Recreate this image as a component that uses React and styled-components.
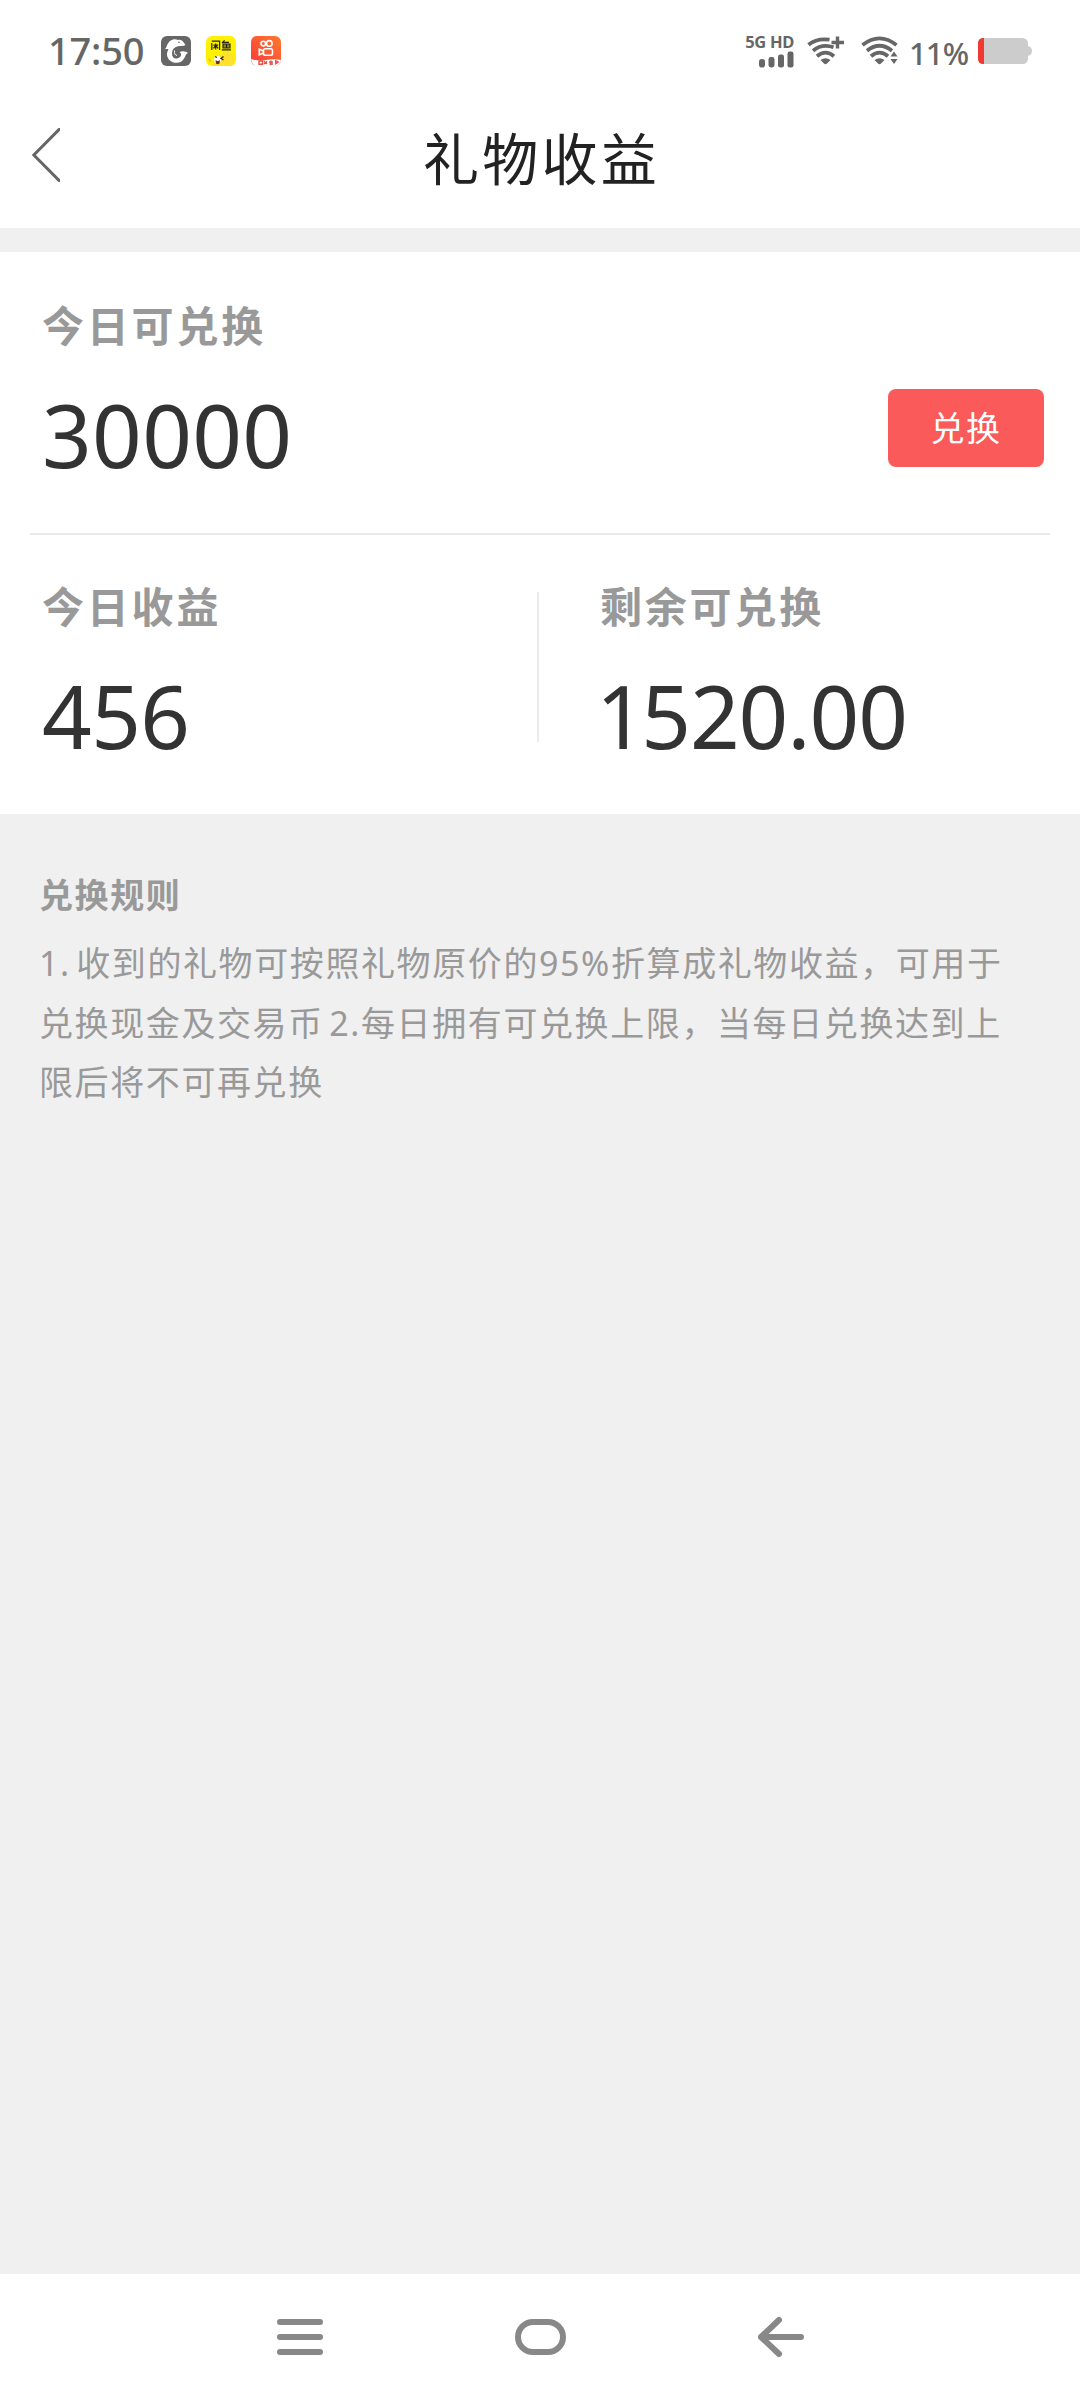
import styled, { createGlobalStyle } from "styled-components";

const RULES = "1. 收到的礼物可按照礼物原价的95%折算成礼物收益，可用于兑换现金及交易币 2.每日拥有可兑换上限，当每日兑换达到上限后将不可再兑换";

const DolphinIcon = () => (
  <svg width="30" height="30" viewBox="0 0 30 30">
    <rect width="30" height="30" rx="6" fill="#666" />
    <path d="M3.5 13.5 C6 12 5.5 8 9 5 C12 2.6 15 3 17 4 C21 3 22 5.5 24.5 9 C22 10.5 19.5 9.5 17 10.2 C13 11 11 14 11 17 C11 21 13 23 16 22.5 C19 22 20.5 20 20 17.5 L18.5 16 C22 14.5 25 15.5 27 17 C24 18 24.5 22.5 20.5 25.5 C14 29 6.5 25 6 19 C5.8 16.5 6.5 15.5 7.5 13.5 C6 12.8 5 13 3.5 13.5 Z" fill="#fff" />
    <path d="M13.5 14.5 C13 17.5 14 19 16 19.5" fill="none" stroke="#fff" strokeWidth="1" />
    <circle cx="18" cy="6.3" r="0.8" fill="#666" />
  </svg>
);

const XianyuIcon = () => (
  <svg width="30" height="30" viewBox="0 0 30 30">
    <rect width="30" height="30" rx="6" fill="#fff200" />
    <path d="M6 30 C7 21 10 18.5 15 19 C18 14.5 27 15 28 21 L28 28 Q26 30 24 30 Z" fill="#ffe02c" />
    <path d="M5.8 7 V14 M5.8 5.2 H13.6 V14 M9.7 7.4 V13.4 M7.4 9.2 H12.2 M9.7 9.5 L7.4 12.3 M9.7 9.5 L12.2 12.3 M18.6 4.4 L16 7 M17 6.4 H23 M17 8.2 H24 V11.8 H17 Z M20.5 8 V12 M17 10 H24 M15.8 13.8 H25" fill="none" stroke="#262510" strokeWidth="1.2" />
    <circle cx="11.5" cy="23.5" r="3.6" fill="#fff" />
    <path d="M9 20.5 L11 21.5 M17.5 20.5 L15 22.5 L17.5 24" fill="none" stroke="#29200c" strokeWidth="1.3" />
    <path d="M9.5 24 Q12 26 14 24 L13.5 27.5 Q11.5 29 10 27.5 Z" fill="#713315" />
    <path d="M2.5 22.5 L4.5 25.5 M3 25 H5.5" stroke="#edc816" strokeWidth="1.4" />
  </svg>
);

const KwaiIcon = () => (
  <svg width="30" height="30" viewBox="0 0 30 30">
    <defs>
      <linearGradient id="kwai" x1="0" y1="1" x2="1" y2="0">
        <stop offset="0" stopColor="#fa393b" />
        <stop offset="1" stopColor="#ff792d" />
      </linearGradient>
    </defs>
    <rect width="30" height="30" rx="6" fill="url(#kwai)" />
    <g fill="none" stroke="#fff" strokeWidth="1.6">
      <circle cx="12.3" cy="7.6" r="2.3" />
      <circle cx="18.3" cy="7.4" r="2.8" />
      <rect x="12.5" y="12.8" width="9" height="6.4" rx="1.8" />
      <path d="M12.5 15 L8.3 13.3 V18.8 L12.5 17" />
    </g>
    <path d="M0 23 Q8 25.5 15 24 Q23 22.5 30 24 Q29 30 24 30 H6 Q1 30 0 23 Z" fill="#fff" />
    <path d="M8 25 H11.5 V28.3 H8 Z M13 25.2 L16 28 M16 25.2 L13 28 M18 26 H22 M20 24.5 V29 M18.5 28 H22" fill="none" stroke="#f34a42" strokeWidth="1.4" />
    <path d="M24 23.5 L28.5 26 L24 29 Z" fill="#f94b67" />
  </svg>
);

const SignalIcon = () => (
  <svg width="36" height="17" viewBox="0 0 36 17" fill="#666">
    <rect x="1" y="8" width="6" height="8.5" rx="2.8" />
    <rect x="10.5" y="6" width="6" height="10.5" rx="2.4" />
    <rect x="20" y="3.5" width="6" height="13" rx="2.2" />
    <rect x="29.5" y="0.5" width="6" height="16" rx="2.2" />
  </svg>
);

const WifiIcon = ({ plus }) => (
  <svg width="38" height="30" viewBox="0 0 38 30">
    <g fill="none" stroke="#666" strokeWidth="3.8">
      <path d={plus ? "M1.5 8.8 Q10 1.8 22.5 3.7" : "M1.5 9 Q18.5 -4.2 35.5 9"} />
      <path d={plus ? "M6 14.8 Q15 7.3 26.5 11.3" : "M6 14.8 Q18.5 4.8 31 14.8"} />
      <path d="M10 20.2 Q18.5 13 27 20.2" />
    </g>
    <path d="M13.5 24 Q18.5 20.5 23.5 24 L20 27.5 Q18.5 29 17 27.5 Z" fill="#666" />
    {plus ? (
      <path d="M30.5 0.5 V12.5 M24.5 6.5 H37" stroke="#666" strokeWidth="3.4" />
    ) : (
      <path d="M33 15.5 L36.5 20.5 H29.5 Z M29.5 23 H36.5 L33 28 Z" fill="#666" />
    )}
  </svg>
);

const BatteryIcon = () => (
  <svg width="54" height="26" viewBox="0 0 54 26">
    <rect width="50" height="26" rx="5.5" fill="#ccc" />
    <path d="M50 8 Q54 9 54 13 Q54 17 50 18 Z" fill="#ccc" />
    <path d="M6 0 H5.5 Q0 0 0 5.5 V20.5 Q0 26 5.5 26 H6 Z" fill="#f1392f" />
  </svg>
);

const App = () => {
  return (
    <Page>
      <GlobalStyle />
      <StatusBar>
        <Clock>17:50</Clock>
        <AppIcons>
          <DolphinIcon />
          <XianyuIcon />
          <KwaiIcon />
        </AppIcons>
        <Network>
          <NetworkLabel>5G HD</NetworkLabel>
          <SignalIcon />
        </Network>
        <WifiGroup>
          <WifiIcon plus />
          <WifiIcon />
        </WifiGroup>
        <BatteryText>11%</BatteryText>
        <BatteryIcon />
      </StatusBar>

      <Header>
        <BackButton aria-label="返回">
          <svg width="28" height="54" viewBox="0 0 28 54" fill="none" stroke="#666" strokeWidth="3">
            <path d="M28.5 0 L1.8 27 L28.5 54" />
          </svg>
        </BackButton>
        <Title>礼物收益</Title>
      </Header>

      <Card>
        <TodayRow>
          <div>
            <Label>今日可兑换</Label>
            <Amount>30000</Amount>
          </div>
          <ExchangeBtn type="button">兑换</ExchangeBtn>
        </TodayRow>
        <Columns>
          <Column>
            <Label>今日收益</Label>
            <Amount $spacing="-0.6px">456</Amount>
          </Column>
          <Column $right>
            <Label>剩余可兑换</Label>
            <Amount $spacing="-1.1px"><Narrow>1</Narrow>520.00</Amount>
          </Column>
        </Columns>
      </Card>

      <Rules>
        <RulesTitle>兑换规则</RulesTitle>
        <RulesText>{RULES}</RulesText>
      </Rules>

      <NavBar>
        <NavItem aria-label="菜单">
          <svg width="46" height="36" viewBox="0 0 46 36" stroke="#888" strokeWidth="6" strokeLinecap="round">
            <path d="M3 3 H43 M3 18 H43 M3 33 H43" />
          </svg>
        </NavItem>
        <NavItem aria-label="主页">
          <svg width="51" height="36" viewBox="0 0 51 36" fill="none" stroke="#888" strokeWidth="6">
            <rect x="3" y="3" width="45" height="30" rx="15" />
          </svg>
        </NavItem>
        <NavItem aria-label="后退">
          <svg width="46" height="42" viewBox="0 0 46 42" fill="none" stroke="#888" strokeWidth="6" strokeLinecap="round" strokeLinejoin="round">
            <path d="M21 4 L3 21 L21 38 M3 21 H43" />
          </svg>
        </NavItem>
      </NavBar>
    </Page>
  );
};

const GlobalStyle = createGlobalStyle`
  * {
    box-sizing: border-box;
  }

  body {
    margin: 0;
    font-family: "Noto Sans", "Noto Sans CJK SC", sans-serif;
  }

  svg {
    display: block;
    flex-shrink: 0;
  }
`;

const Page = styled.div`
  display: flex;
  flex-direction: column;
  width: 1080px;
  height: 2400px;
  background: #f0f0f0;
`;

const StatusBar = styled.div`
  display: flex;
  align-items: center;
  height: 102px;
  padding: 0 48px;
  background: #fff;
  color: #666;
`;

const Clock = styled.div`
  width: 113px;
  padding-bottom: 2px;
  font-size: 38px;
  font-weight: 500;
  line-height: 40px;
  letter-spacing: -0.2px;
`;

const AppIcons = styled.div`
  display: flex;
  gap: 15px;
`;

const Network = styled.div`
  display: flex;
  flex-direction: column;
  align-items: flex-end;
  width: 50px;
  margin-left: auto;
  padding-bottom: 2px;
`;

const NetworkLabel = styled.div`
  font-size: 16.5px;
  font-weight: 700;
  line-height: 18px;
  letter-spacing: -0.3px;
  white-space: nowrap;
`;

const WifiGroup = styled.div`
  display: flex;
  gap: 16px;
  margin: 0 10px 0 13px;
`;

const BatteryText = styled.div`
  width: 69px;
  padding-top: 4px;
  font-size: 31px;
  font-weight: 500;
  line-height: 34px;
  letter-spacing: -0.9px;
`;

const Header = styled.header`
  display: grid;
  grid-template-columns: 200px 1fr 200px;
  align-items: center;
  height: 126px;
  padding-bottom: 20px;
  background: #fff;
`;

const BackButton = styled.button`
  padding: 0 0 0 32px;
  border: none;
  background: none;
`;

const Title = styled.h1`
  margin: 0;
  padding: 5px 0 0 3px;
  color: #222;
  font-size: 56px;
  font-weight: 400;
  line-height: 80px;
  letter-spacing: 3.3px;
  text-align: center;
`;

const Card = styled.section`
  height: 562px;
  margin-top: 24px;
  padding: 0 30px;
  background: #fff;
`;

const TodayRow = styled.div`
  display: flex;
  justify-content: space-between;
  height: 283px;
  padding: 44px 6px 0 12px;
  border-bottom: 2px solid #ebebeb;
`;

const Label = styled.div`
  color: #999;
  font-size: 42px;
  font-weight: 700;
  line-height: 60px;
  letter-spacing: 2.8px;
`;

const Amount = styled.div`
  margin-top: 33px;
  color: #333;
  font-size: 87px;
  line-height: 90px;
  letter-spacing: ${({ $spacing }) => $spacing || "0.3px"};
`;

const Narrow = styled.span`
  margin-left: -4px;
  letter-spacing: -4.5px;
`;

const ExchangeBtn = styled.button`
  width: 156px;
  height: 78px;
  margin-top: 93px;
  padding: 0 0 4px;
  border: none;
  border-radius: 8px;
  background: #fb5a5a;
  color: #fff;
  font-family: inherit;
  font-size: 34px;
  letter-spacing: 1.5px;
`;

const Columns = styled.div`
  display: grid;
  grid-template-columns: 507px 1fr;
  padding-top: 57px;
`;

const Column = styled.div`
  height: 150px;
  padding-left: ${({ $right }) => ($right ? "61px" : "12px")};
  border-left: ${({ $right }) => ($right ? "2px solid #ebebeb" : "none")};

  ${Label} {
    margin-top: -15px;
  }
`;

const Rules = styled.section`
  flex: 1;
  padding: 51px 60px 0 39px;
  color: #999;
`;

const RulesTitle = styled.h2`
  margin: 0;
  font-size: 34px;
  font-weight: 700;
  line-height: 60px;
  letter-spacing: 1.6px;
`;

const RulesText = styled.p`
  margin: 9px 0 0;
  font-size: 34px;
  line-height: 59.5px;
  letter-spacing: 1.6px;
  word-spacing: -5px;
`;

const NavBar = styled.nav`
  display: flex;
  justify-content: center;
  gap: 192px;
  height: 126px;
  background: #fff;
`;

const NavItem = styled.button`
  display: flex;
  align-items: center;
  padding: 0;
  border: none;
  background: none;
`;

export default App;
